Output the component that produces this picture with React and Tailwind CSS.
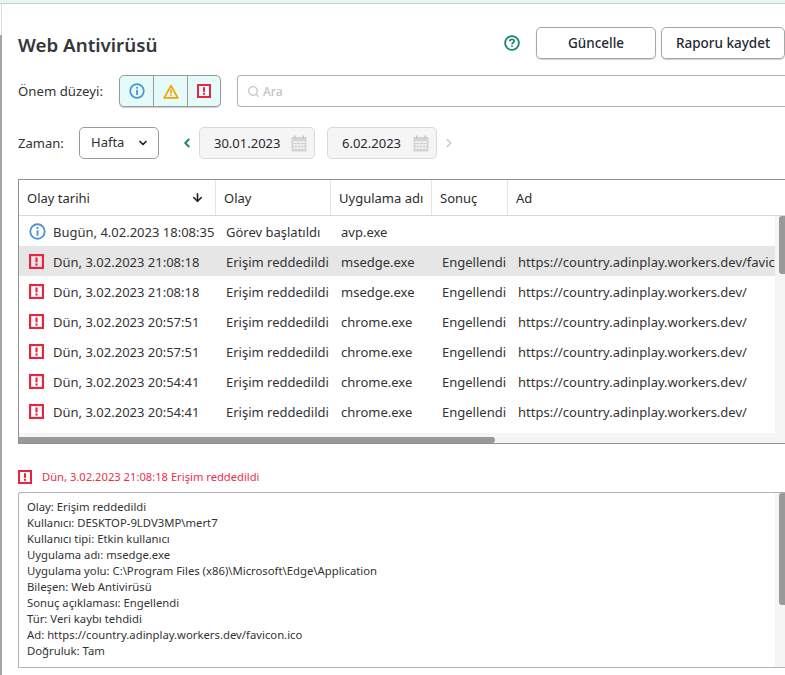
import React from 'react';
import { Search, ChevronDown, ChevronLeft, ChevronRight, ArrowDown } from 'lucide-react';

const rows = [
  { level: 'info', date: 'Bugün, 4.02.2023 18:08:35', event: 'Görev başlatıldı', app: 'avp.exe', result: '', name: '' },
  { level: 'err', date: 'Dün, 3.02.2023 21:08:18', event: 'Erişim reddedildi', app: 'msedge.exe', result: 'Engellendi', name: 'https://country.adinplay.workers.dev/favicon.ico', active: true },
  { level: 'err', date: 'Dün, 3.02.2023 21:08:18', event: 'Erişim reddedildi', app: 'msedge.exe', result: 'Engellendi', name: 'https://country.adinplay.workers.dev/' },
  { level: 'err', date: 'Dün, 3.02.2023 20:57:51', event: 'Erişim reddedildi', app: 'chrome.exe', result: 'Engellendi', name: 'https://country.adinplay.workers.dev/' },
  { level: 'err', date: 'Dün, 3.02.2023 20:57:51', event: 'Erişim reddedildi', app: 'chrome.exe', result: 'Engellendi', name: 'https://country.adinplay.workers.dev/' },
  { level: 'err', date: 'Dün, 3.02.2023 20:54:41', event: 'Erişim reddedildi', app: 'chrome.exe', result: 'Engellendi', name: 'https://country.adinplay.workers.dev/' },
  { level: 'err', date: 'Dün, 3.02.2023 20:54:41', event: 'Erişim reddedildi', app: 'chrome.exe', result: 'Engellendi', name: 'https://country.adinplay.workers.dev/' },
];

const details = [
  'Olay: Erişim reddedildi',
  'Kullanıcı: DESKTOP-9LDV3MP\\mert7',
  'Kullanıcı tipi: Etkin kullanıcı',
  'Uygulama adı: msedge.exe',
  'Uygulama yolu: C:\\Program Files (x86)\\Microsoft\\Edge\\Application',
  'Bileşen: Web Antivirüsü',
  'Sonuç açıklaması: Engellendi',
  'Tür: Veri kaybı tehdidi',
  'Ad: https://country.adinplay.workers.dev/favicon.ico',
  'Doğruluk: Tam',
];

const InfoIcon = ({ size = 16 }) => (
  <svg width={size} height={size} viewBox="0 0 16 16" fill="none" className="shrink-0">
    <circle cx="8" cy="8" r="6.8" stroke="#4b94d0" strokeWidth="1.7" />
    <rect x="7.1" y="3.8" width="1.8" height="1.8" fill="#4b94d0" />
    <rect x="7.1" y="6.8" width="1.8" height="5.2" fill="#4b94d0" />
  </svg>
);

const WarnIcon = () => (
  <svg width="16" height="15" viewBox="0 0 16 15" fill="none" className="shrink-0">
    <path d="M8 1.6 14.8 13.9H1.2Z" stroke="#f5a300" strokeWidth="1.8" strokeLinejoin="round" />
    <rect x="7.2" y="5.4" width="1.6" height="4.2" fill="#f5a300" />
    <rect x="7.2" y="10.4" width="1.6" height="1.6" fill="#f5a300" />
  </svg>
);

const ErrIcon = ({ size = 14 }) => (
  <svg width={size} height={size} viewBox="0 0 14 14" fill="none" className="shrink-0">
    <rect x="1" y="1" width="12" height="12" stroke="#e8253f" strokeWidth="2" />
    <rect x="6" y="3.2" width="2" height="4.6" fill="#e8253f" />
    <rect x="6" y="8.8" width="2" height="2" fill="#e8253f" />
  </svg>
);

const CalendarIcon = () => (
  <svg width="16" height="17" viewBox="0 0 16 17" className="shrink-0">
    <rect x="0.5" y="2" width="15" height="14.5" fill="#d4d4d4" />
    <rect x="3" y="0.5" width="1.5" height="3" fill="#c4c4c4" />
    <rect x="11.5" y="0.5" width="1.5" height="3" fill="#c4c4c4" />
    <g fill="#f5f5f5">
      <rect x="2.5" y="6" width="2" height="2" /><rect x="5.5" y="6" width="2" height="2" /><rect x="8.5" y="6" width="2" height="2" /><rect x="11.5" y="6" width="2" height="2" />
      <rect x="2.5" y="9" width="2" height="2" /><rect x="5.5" y="9" width="2" height="2" /><rect x="8.5" y="9" width="2" height="2" /><rect x="11.5" y="9" width="2" height="2" />
      <rect x="2.5" y="12" width="2" height="2" /><rect x="5.5" y="12" width="2" height="2" /><rect x="8.5" y="12" width="2" height="2" /><rect x="11.5" y="12" width="2" height="2" />
    </g>
  </svg>
);

const HelpIcon = () => (
  <svg width="16" height="16" viewBox="0 0 16 16" fill="none">
    <circle cx="8" cy="8" r="6.9" stroke="#1d8a72" strokeWidth="1.9" />
    <path d="M5.9 6.3C5.9 5 6.9 4.4 8 4.4s2.1.7 2.1 1.8c0 1.5-2.1 1.5-2.1 3" stroke="#1d8a72" strokeWidth="1.7" />
    <rect x="7.2" y="10.3" width="1.6" height="1.6" fill="#1d8a72" />
  </svg>
);

const DateBox = ({ value, className }) => (
  <div className={`h-[32px] flex items-center justify-between bg-[#f5f5f5] border border-[#d9d9d9] rounded-[5px] text-[13px] text-[#1f2a33] pl-[14px] pr-[7px] ${className}`}>
    <span className="pt-[2px]">{value}</span>
    <CalendarIcon />
  </div>
);

const HeaderCell = ({ className, children }) => (
  <div className={`shrink-0 h-full flex items-center border-r border-[#e4e4e4] pl-[8px] ${className}`}>{children}</div>
);

const Row = ({ row }) => (
  <div className={`h-[30px] flex items-center text-[13px] text-[#333] whitespace-nowrap ${row.active ? 'bg-[#e6e6e6]' : ''}`}>
    <div className="w-[34px] shrink-0 pl-[10px] flex items-center">
      {row.level === 'info' ? <InfoIcon size={17} /> : <ErrIcon size={15} />}
    </div>
    <div className="w-[173px] shrink-0 pt-[3px]">{row.date}</div>
    <div className="w-[115px] shrink-0 pt-[3px]">{row.event}</div>
    <div className="w-[101px] shrink-0 pt-[3px]">{row.app}</div>
    <div className="w-[76px] shrink-0 pt-[3px]">{row.result}</div>
    <div className="shrink-0 pt-[3px]">{row.name}</div>
  </div>
);

export default function App() {
  return (
    <div className="w-[785px] h-[675px] overflow-hidden bg-white text-[#2c2c2c] font-['Noto_Sans','Open_Sans',sans-serif] flex flex-col">
      {/* top strip */}
      <div className="h-[4px] shrink-0 bg-[#e6f5f3] border-b border-[#c9ced0]" />

      <div className="flex-1 flex min-h-0">
        {/* window edge */}
        <div className="w-[2px] shrink-0 flex flex-col">
          <div className="h-[31px] border-r border-[#dedede]" />
          <div className="flex-1 bg-[#a3a3a3]" />
        </div>

        <div className="flex-1 min-w-0 pl-[16px]">
          {/* title row */}
          <div className="h-[32px] mt-[23px] flex items-center justify-between">
            <h1 className="text-[18.75px] font-semibold text-[#33373a] leading-none mt-[4px]">Web Antivirüsü</h1>
            <div className="flex items-center">
              <HelpIcon />
              <button className="ml-[16px] w-[120px] h-[32px] border border-[#a6a6a6] rounded-[5px] shadow-[0_1px_1px_rgba(0,0,0,0.2)] text-[13.5px] font-medium text-[#1f2a33]">Güncelle</button>
              <button className="ml-[5px] w-[124px] h-[32px] border border-[#a6a6a6] rounded-[5px] shadow-[0_1px_1px_rgba(0,0,0,0.2)] text-[13.5px] font-medium text-[#1f2a33] whitespace-nowrap">Raporu kaydet</button>
            </div>
          </div>

          {/* severity + search */}
          <div className="h-[32px] mt-[16px] flex items-center">
            <span className="w-[101px] shrink-0 pt-[2px] text-[13.2px] text-[#333]">Önem düzeyi:</span>
            <div className="w-[102px] h-[32px] shrink-0 flex bg-[#e4fbf9] border border-[#9a9a9a] rounded-[5px] shadow-[0_1px_1px_rgba(0,0,0,0.2)]">
              <div className="w-[34px] flex items-center justify-center border-r border-[#9a9a9a]"><InfoIcon /></div>
              <div className="w-[34px] flex items-center justify-center border-r border-[#9a9a9a]"><WarnIcon /></div>
              <div className="flex-1 flex items-center justify-center"><ErrIcon /></div>
            </div>
            <div className="ml-[16px] flex-1 h-[32px] flex items-center gap-[3px] border border-r-0 border-[#b3b3b3] rounded-l-[4px] pl-[9px] text-[12px] font-medium text-[#c4c4c4]">
              <Search size={13} strokeWidth={2.5} className="text-[#c9c9c9]" />
              <span className="pt-[2px]">Ara</span>
            </div>
          </div>

          {/* period */}
          <div className="h-[32px] mt-[20px] flex items-center">
            <span className="w-[61px] shrink-0 pt-[2px] text-[13px] text-[#333]">Zaman:</span>
            <div className="w-[80px] h-[32px] shrink-0 flex items-center justify-between border border-[#9a9a9a] rounded-[5px] pl-[11px] pr-[9px] text-[13px] text-[#333]">
              <span>Hafta</span>
              <ChevronDown size={12} strokeWidth={3.5} className="text-[#222]" />
            </div>
            <ChevronLeft size={14} strokeWidth={3.5} className="ml-[21px] text-[#1d8a72] shrink-0" />
            <DateBox value="30.01.2023" className="ml-[5px] w-[116px]" />
            <DateBox value="6.02.2023" className="ml-[12px] w-[110px]" />
            <ChevronRight size={14} strokeWidth={2.5} className="ml-[5px] text-[#c9c9c9] shrink-0" />
          </div>

          {/* events table */}
          <div className="mt-[20px] w-[767px] border-l border-t border-b border-[#909090]">
            <div className="h-[36px] flex border-b border-[#d9d9d9] text-[13px] text-[#2c2c2c] whitespace-nowrap">
              <HeaderCell className="w-[197px] justify-between pr-[11px]">
                <span className="pt-[2px]">Olay tarihi</span>
                <ArrowDown size={13} strokeWidth={3} className="text-[#222]" />
              </HeaderCell>
              <HeaderCell className="w-[115px]"><span className="pt-[2px]">Olay</span></HeaderCell>
              <HeaderCell className="w-[101px]"><span className="pt-[2px]">Uygulama adı</span></HeaderCell>
              <HeaderCell className="w-[76px]"><span className="pt-[2px]">Sonuç</span></HeaderCell>
              <div className="flex-1 flex items-center pl-[8px]"><span className="pt-[2px]">Ad</span></div>
            </div>
            <div className="h-[217px] flex">
              <div className="w-[756px] shrink-0 overflow-hidden">
                {rows.map((row, i) => <Row key={i} row={row} />)}
              </div>
              <div className="flex-1 flex justify-end bg-[#f5f5f5]">
                <div className="w-[6px] h-[58px] bg-[#999] rounded-l-[3px]" />
              </div>
            </div>
            <div className="h-[10px] bg-[#f5f5f5] pt-[4px]">
              <div className="w-[476px] h-[6px] bg-[#999] rounded-r-[3px]" />
            </div>
          </div>

          {/* selected event */}
          <div className="mt-[26px] h-[14px] flex items-center gap-[10px] text-[11.2px] text-[#e8304a] whitespace-nowrap">
            <ErrIcon />
            <span>Dün, 3.02.2023 21:08:18 Erişim reddedildi</span>
          </div>
          <div className="mt-[8px] w-[767px] h-[176px] flex border-l border-t border-b border-[#b3b3b3] rounded-tl-[3px]">
            <div className="w-[756px] shrink-0 pl-[8px] pt-[6px] text-[11.3px] leading-[16px] text-[#333]">
              {details.map((line, i) => <div key={i}>{line}</div>)}
            </div>
            <div className="flex-1 flex justify-end bg-[#f5f5f5]">
              <div className="w-[6px] h-[112px] bg-[#999] rounded-l-[3px]" />
            </div>
          </div>
        </div>
      </div>
    </div>
  );
}
